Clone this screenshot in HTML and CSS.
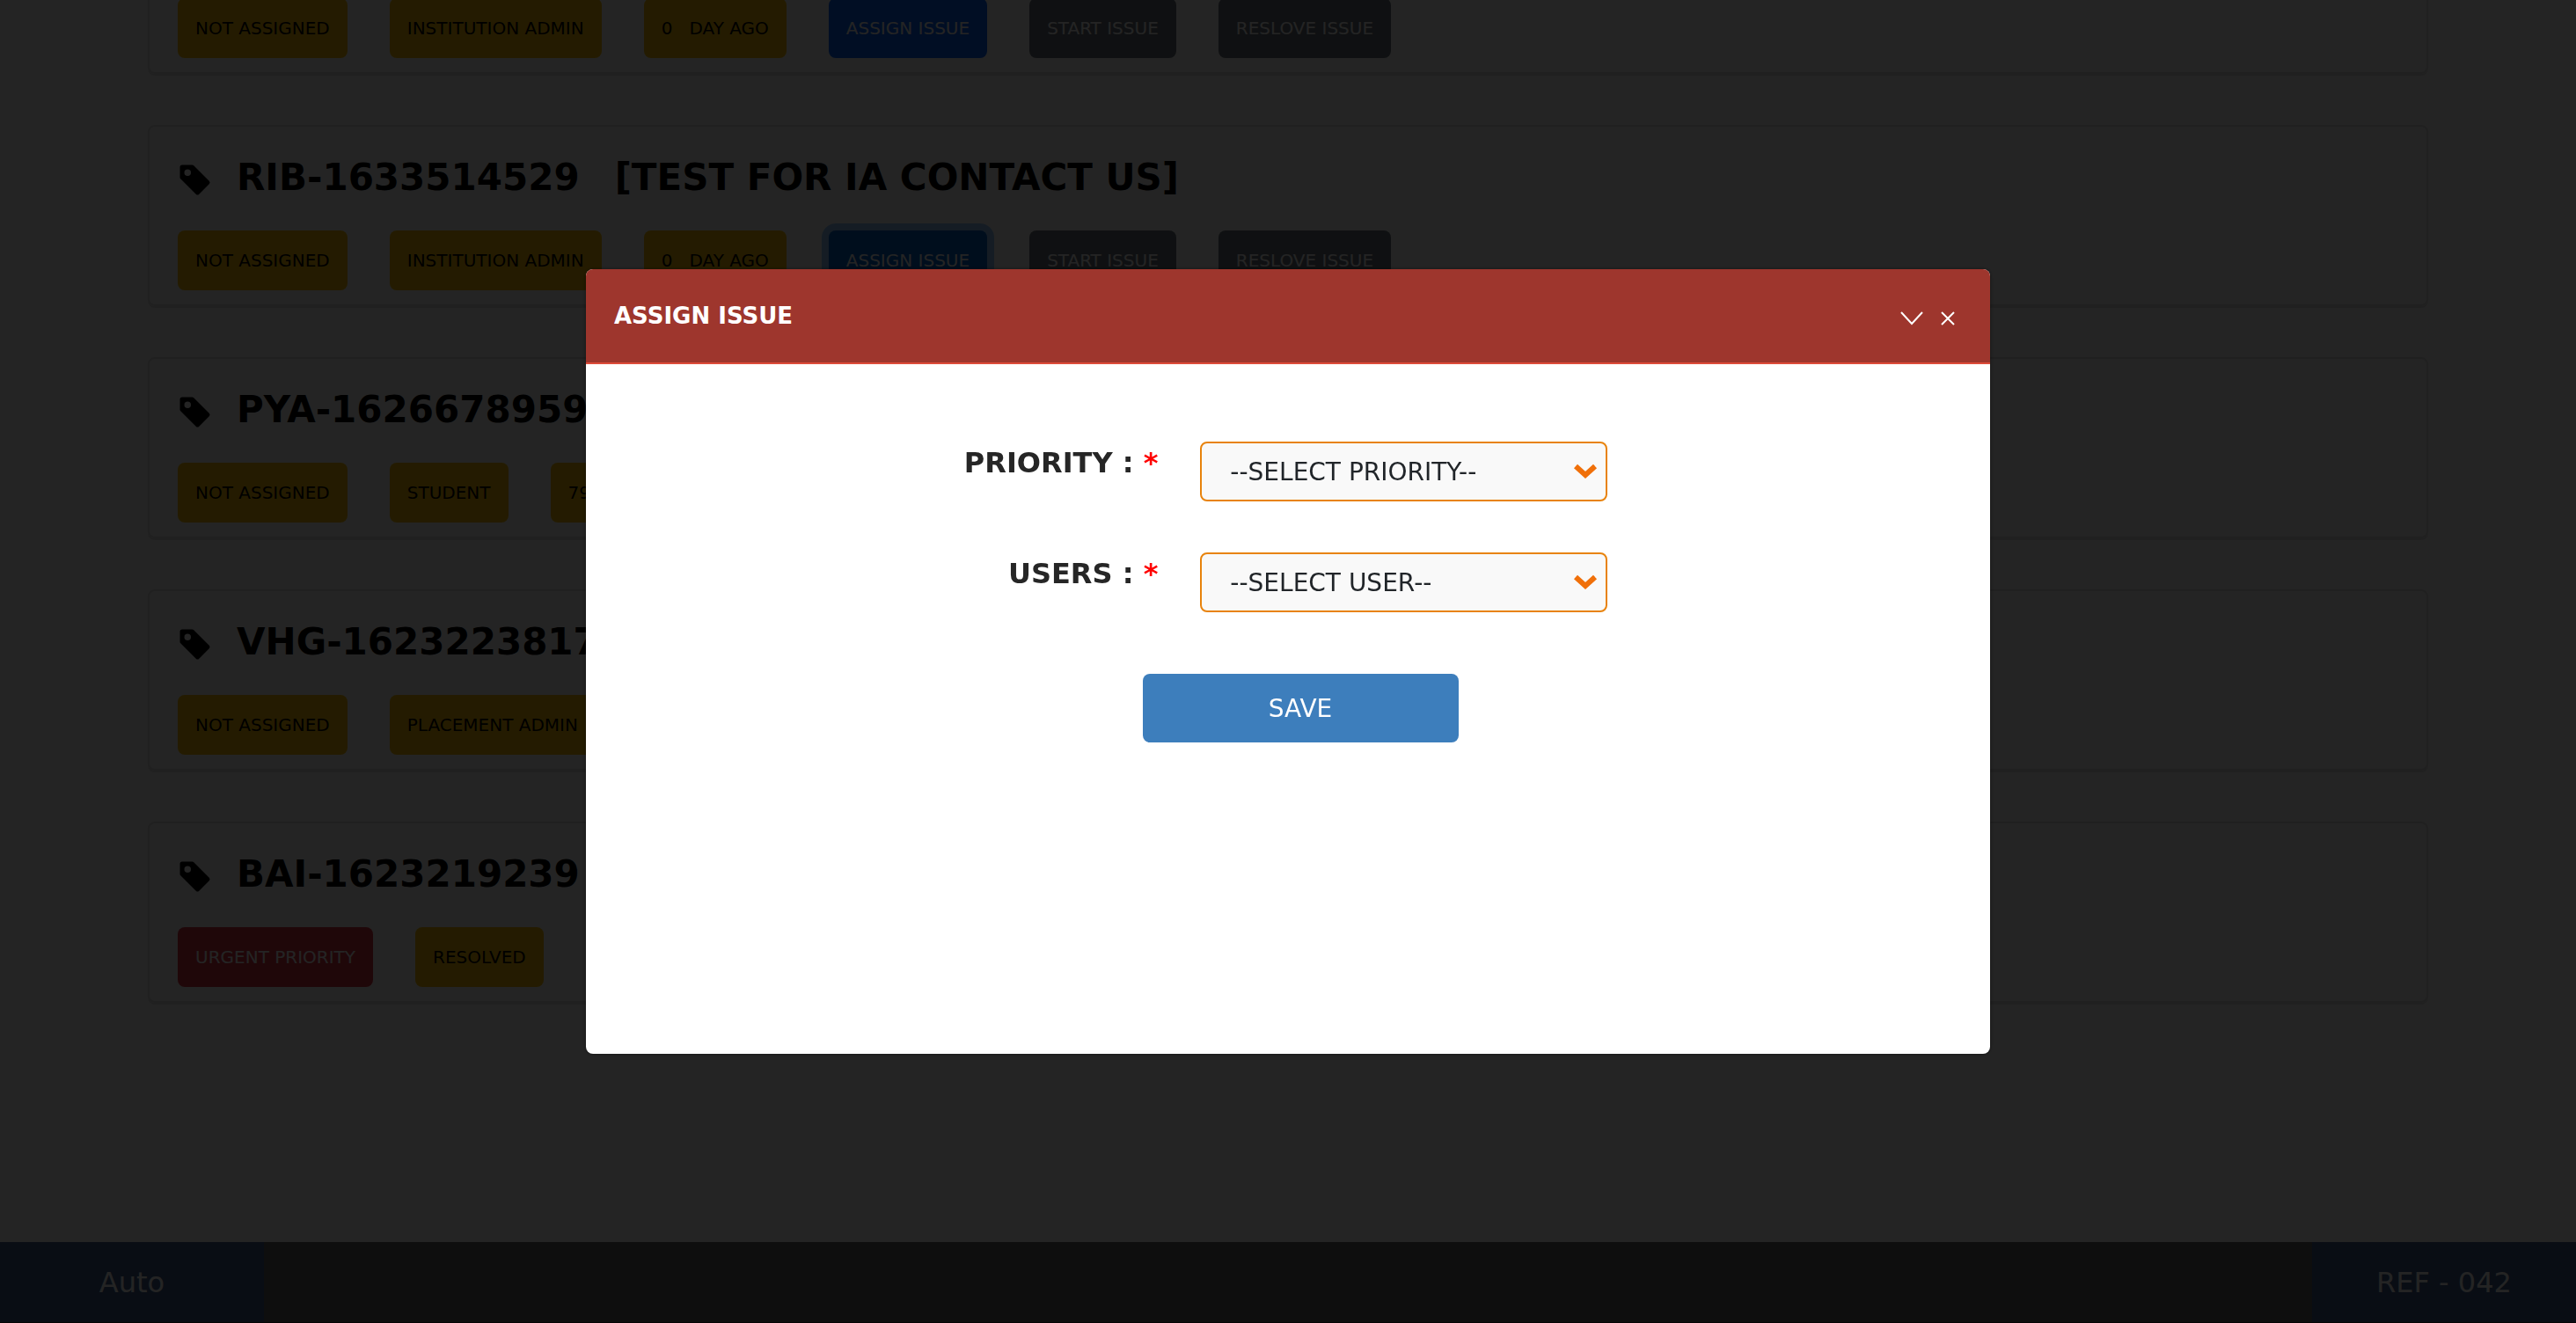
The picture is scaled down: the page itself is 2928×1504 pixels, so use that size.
FILE: index.html
```html
<!DOCTYPE html>
<html lang="en">
<head>
<meta charset="utf-8">
<meta name="viewport" content="width=device-width, initial-scale=1">
<title>Issues</title>
<link rel="stylesheet" href="styles.css">
</head>
<body>
<svg class="defs" aria-hidden="true">
  <symbol id="tag" viewBox="0 0 16 16"><path d="M2 1a1 1 0 0 0-1 1v4.586a1 1 0 0 0 .293.707l7 7a1 1 0 0 0 1.414 0l4.586-4.586a1 1 0 0 0 0-1.414l-7-7A1 1 0 0 0 6.586 1H2zm4 3.500a1.500 1.500 0 1 1-3 0 1.500 1.500 0 0 1 3 0z"/></symbol>
  <symbol id="arrow" viewBox="0 0 28 20"><path d="M3 4 L14 14 L25 4" fill="none" stroke="#f0700a" stroke-width="6"/></symbol>
</svg>

<main class="issues">
  <article class="card">
    <div class="chips">
      <span class="chip">NOT ASSIGNED</span>
      <span class="chip">INSTITUTION ADMIN</span>
      <span class="chip">0 &nbsp; DAY AGO</span>
      <button class="chip chip-primary" type="button">ASSIGN ISSUE</button>
      <button class="chip chip-muted" type="button">START ISSUE</button>
      <button class="chip chip-muted" type="button">RESLOVE ISSUE</button>
    </div>
  </article>

  <article class="card">
    <h2 class="card-title"><svg class="tag"><use href="#tag"/></svg><span class="card-name"><span>RIB-1633514529</span><span>[TEST FOR IA CONTACT US]</span></span></h2>
    <div class="chips">
      <span class="chip">NOT ASSIGNED</span>
      <span class="chip">INSTITUTION ADMIN</span>
      <span class="chip">0 &nbsp; DAY AGO</span>
      <button class="chip chip-primary is-active" type="button">ASSIGN ISSUE</button>
      <button class="chip chip-muted" type="button">START ISSUE</button>
      <button class="chip chip-muted" type="button">RESLOVE ISSUE</button>
    </div>
  </article>

  <article class="card">
    <h2 class="card-title"><svg class="tag"><use href="#tag"/></svg><span class="card-name">PYA-1626678959</span></h2>
    <div class="chips">
      <span class="chip">NOT ASSIGNED</span>
      <span class="chip">STUDENT</span>
      <span class="chip">79 &nbsp; DAY AGO</span>
    </div>
  </article>

  <article class="card">
    <h2 class="card-title"><svg class="tag"><use href="#tag"/></svg><span class="card-name">VHG-1623223817</span></h2>
    <div class="chips">
      <span class="chip">NOT ASSIGNED</span>
      <span class="chip">PLACEMENT ADMIN</span>
    </div>
  </article>

  <article class="card">
    <h2 class="card-title"><svg class="tag"><use href="#tag"/></svg><span class="card-name">BAI-1623219239</span></h2>
    <div class="chips">
      <span class="chip chip-danger">URGENT PRIORITY</span>
      <span class="chip">RESOLVED</span>
    </div>
  </article>
</main>

<footer class="footer">
  <span class="footer-cell">Auto</span>
  <span class="footer-cell">REF - 042</span>
</footer>

<div class="overlay">
  <section class="modal" role="dialog" aria-modal="true" aria-labelledby="modal-title">
    <header class="modal-header">
      <h1 class="modal-title" id="modal-title">ASSIGN ISSUE</h1>
      <button class="icon-button" type="button" aria-label="Minimize"><svg width="26" height="16" viewBox="0 0 26 16"><path d="M1 1 L13 14 L25 1"/></svg></button>
      <button class="icon-button" type="button" aria-label="Close"><svg width="16" height="16" viewBox="0 0 16 16"><path d="M1 1 L15 15 M15 1 L1 15"/></svg></button>
    </header>
    <form class="modal-form">
      <div class="field">
        <label class="field-label" for="priority">PRIORITY : <span class="required">*</span></label>
        <div class="select-wrap">
          <select class="select" id="priority"><option>--SELECT PRIORITY--</option></select>
          <svg class="select-arrow"><use href="#arrow"/></svg>
        </div>
      </div>
      <div class="field">
        <label class="field-label" for="user">USERS : <span class="required">*</span></label>
        <div class="select-wrap">
          <select class="select" id="user"><option>--SELECT USER--</option></select>
          <svg class="select-arrow"><use href="#arrow"/></svg>
        </div>
      </div>
      <div class="actions"><button class="save" type="button">SAVE</button></div>
    </form>
  </section>
</div>
</body>
</html>
```
FILE: styles.css
```css
* {
  box-sizing: border-box;
}

body {
  margin: 0;
  height: 100vh;
  display: flex;
  flex-direction: column;
  overflow: hidden;
  background: #fff;
  color: #000;
  font-family: "DejaVu Sans", sans-serif;
}

button,
select {
  font-family: inherit;
}

.defs {
  position: absolute;
  width: 0;
  height: 0;
}

/* Issue list, scrolled to its end */
.issues {
  flex: 1;
  min-height: 0;
  overflow: hidden;
  display: flex;
  flex-direction: column;
  justify-content: flex-end;
  gap: 58px;
  padding: 0 168px 272px;
}

.card {
  flex: none;
  min-height: 206px;
  display: flex;
  flex-direction: column;
  justify-content: flex-end;
  gap: 28px;
  padding: 32px 32px 16px;
  border: 2px solid #dfdfdf;
  border-radius: 8px;
  box-shadow: 0 2px 1px rgba(0, 0, 0, 0.12);
}

.card-title {
  display: flex;
  align-items: center;
  gap: 27px;
  height: 58px;
  margin: 0;
  font-size: 42px;
  line-height: 52px;
}

.card-name {
  display: flex;
  gap: 40px;
  padding-bottom: 6px;
}

.tag {
  flex: none;
  width: 40px;
  height: 40px;
}

.chips {
  display: flex;
  gap: 48px;
}

.chip {
  height: 68px;
  padding: 0 20px;
  border: 0;
  border-radius: 8px;
  background: #ffc107;
  color: #000;
  font-size: 20px;
  line-height: 68px;
  white-space: nowrap;
}

.chip-primary {
  background: #0a66ff;
  color: #fff;
}

.chip-primary.is-active {
  background: #0062cc;
  box-shadow: 0 0 0 8px rgba(38, 143, 255, 0.5);
}

.chip-muted {
  background: #6c757d;
  color: #fff;
}

.chip-danger {
  background: #dc3545;
  color: #fff;
}

.footer {
  display: flex;
  justify-content: space-between;
  height: 92px;
  border-bottom: 1px solid #222;
  background: #636363;
}

.footer-cell {
  width: 300px;
  background: #405c8e;
  color: #fff;
  font-size: 32px;
  line-height: 92px;
  text-align: center;
}

/* Dialog */
.overlay {
  position: fixed;
  inset: 0;
  display: flex;
  align-items: center;
  justify-content: center;
  padding: 32px;
  background: rgba(0, 0, 0, 0.86);
}

.modal {
  width: 100%;
  max-width: 1596px;
  min-height: 892px;
  overflow: hidden;
  border-radius: 8px;
  background: #fff;
  box-shadow: 0 0 4px rgba(0, 0, 0, 0.5);
}

.modal-header {
  display: flex;
  align-items: center;
  gap: 20px;
  height: 108px;
  padding: 0 40px 0 32px;
  border-bottom: 2px solid #dd4b39;
  background: #9e362d;
  color: #fff;
}

.modal-title {
  flex: 1;
  margin: 0;
  font-size: 26px;
  line-height: 40px;
}

.icon-button {
  display: flex;
  padding: 6px 0 0;
  border: 0;
  background: none;
}

.icon-button path {
  fill: none;
  stroke: #fff;
  stroke-width: 2;
}

.modal-form {
  display: flex;
  flex-direction: column;
  gap: 58px;
  padding-top: 88px;
}

.field {
  display: grid;
  grid-template-columns: 41% 29%;
  gap: 44px;
}

.field-label {
  padding-right: 4px;
  color: #262626;
  font-size: 32px;
  font-weight: bold;
  line-height: 48px;
  text-align: right;
}

.required {
  color: #f00;
}

.select-wrap {
  position: relative;
}

.select {
  display: block;
  width: 100%;
  height: 68px;
  padding: 0 32px;
  appearance: none;
  border: 2px solid #e8830c;
  border-radius: 8px;
  background: #f9f9f9;
  color: #212529;
  font-size: 28px;
}

.select-arrow {
  position: absolute;
  top: 24px;
  right: 11px;
  width: 28px;
  height: 20px;
  pointer-events: none;
}

.actions {
  display: flex;
  justify-content: center;
  padding: 12px 0 0 28px;
}

.save {
  width: 359px;
  height: 78px;
  border: 0;
  border-radius: 8px;
  background: #3d7ebc;
  color: #fff;
  font-size: 28px;
}
```
